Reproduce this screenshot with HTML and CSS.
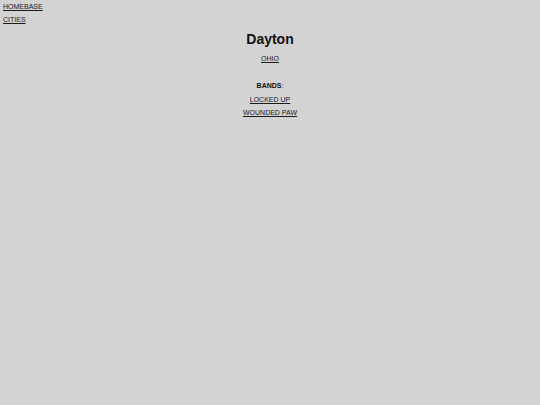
FILE: index.html
```html
<!DOCTYPE html>
<html>
<head>
<meta charset="utf-8">
<link rel="stylesheet" href="styles.css">
</head>
<body>
<nav class="nav">
  <a href="#" class="nav-link">HOMEBASE</a>
  <a href="#" class="nav-link">CITIES</a>
</nav>
<main class="city">
  <h1 class="city-name">Dayton</h1>
  <a href="#" class="link">OHIO</a>
  <div class="bands">
    <div class="bands-label"><b>BANDS</b>:</div>
    <a href="#" class="link">LOCKED UP</a>
    <a href="#" class="link">WOUNDED PAW</a>
  </div>
</main>
</body>
</html>
```
FILE: styles.css
```css
html, body {
  margin: 0;
  padding: 0;
  background: #d3d3d3;
  font-family: "Liberation Sans", Arial, sans-serif;
  font-size: 7px;
  color: #111;
}
body {
  padding: 0 3px;
  height: 405px;
  box-sizing: border-box;
}
.nav {
  display: flex;
  flex-direction: column;
  align-items: flex-start;
}
.nav-link, .link {
  color: #1a1a1a;
  text-decoration: underline;
  line-height: 13px;
}
.nav-link {
  height: 13px;
}
.city {
  display: flex;
  flex-direction: column;
  align-items: center;
  margin-top: 4px;
}
.city-name {
  font-size: 14px;
  font-weight: bold;
  margin: 0;
  line-height: 18px;
}
.city > .link {
  margin-top: 4px;
}
.bands {
  margin-top: 14px;
  display: flex;
  flex-direction: column;
  align-items: center;
}
.bands-label {
  line-height: 14px;
}
.bands .link {
  line-height: 13px;
}
```
